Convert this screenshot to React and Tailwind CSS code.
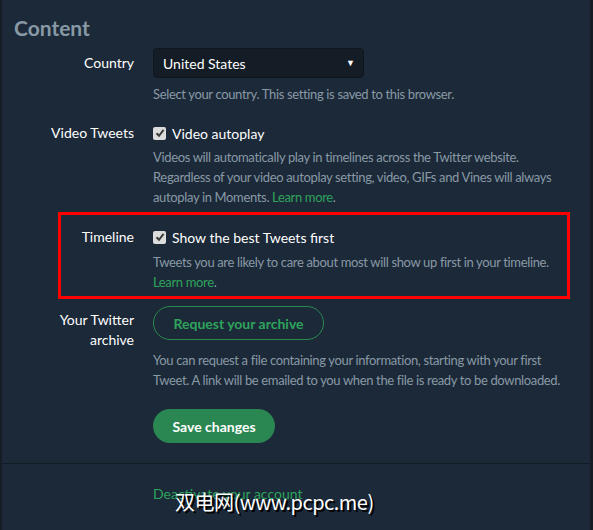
import React from 'react';

const font = { fontFamily: 'Lato, "Open Sans", sans-serif' };

// Native-looking checked checkbox
const CheckBox = () => (
  <span className="inline-flex h-[13px] w-[13px] shrink-0 items-center justify-center rounded-[2px] bg-[#dcdcdc]">
    <svg width="10" height="10" viewBox="0 0 10 10">
      <path d="M1.5 5.2 L4 7.8 L8.6 1.8" fill="none" stroke="#3b3b3b" strokeWidth="2" />
    </svg>
  </span>
);

const Help = ({ lines, link }) => (
  <div className="text-[13px] leading-[20px] tracking-[-0.35px] text-[#8899a6]">
    {lines.map((l, i) => (
      <div key={i} className="whitespace-nowrap">
        {l}
        {link && i === lines.length - 1 && (
          <>
            {l ? ' ' : ''}
            <span className="text-[#2ea35c]">Learn more</span>.
          </>
        )}
      </div>
    ))}
  </div>
);

const Row = ({ label, children, className = '' }) => (
  <div className={`grid grid-cols-[132px_1fr] gap-x-[19px] ${className}`}>
    <div className="text-right text-[14px] leading-[20px] text-white">{label}</div>
    <div>{children}</div>
  </div>
);

const App = () => {
  return (
    <div
      className="relative h-[530px] w-[593px] overflow-hidden border-l-2 border-r-[3px] border-[#141d26] bg-[#1c2938]"
      style={font}
    >
      <h2 className="pl-3 pt-4 text-[21px] font-bold leading-[24px] text-[#8899a6]">Content</h2>

      {/* Country */}
      <div className="mt-2 grid grid-cols-[132px_1fr] gap-x-[19px]">
        <div className="pt-[5px] text-right text-[14px] leading-[20px] text-white">Country</div>
        <div>
          <div className="flex h-[30px] w-[211px] items-center justify-between rounded-[4px] border border-[#0f161d] bg-[#141d26] pl-[9px] pr-[8px] text-[14px] text-white">
            <span>United States</span>
            <span className="text-[9px]">▼</span>
          </div>
          <div className="mt-[6px]">
            <Help lines={['Select your country. This setting is saved to this browser.']} />
          </div>
        </div>
      </div>

      {/* Video Tweets */}
      <Row label="Video Tweets" className="mt-[19px]">
        <div className="flex h-[20px] items-center gap-[6px] text-[14px] text-white">
          <CheckBox />
          <span>Video autoplay</span>
        </div>
        <div className="mt-1">
          <Help
            link
            lines={[
              'Videos will automatically play in timelines across the Twitter website.',
              'Regardless of your video autoplay setting, video, GIFs and Vines will always',
              'autoplay in Moments.',
            ]}
          />
        </div>
      </Row>

      {/* Timeline */}
      <div className="relative mt-5">
        <Row label="Timeline">
          <div className="flex h-[20px] items-center gap-[6px] text-[14px] text-white">
            <CheckBox />
            <span>Show the best Tweets first</span>
          </div>
          <div className="mt-[5px]">
            <Help link lines={['Tweets you are likely to care about most will show up first in your timeline.', '']} />
          </div>
        </Row>
        <div className="pointer-events-none absolute left-[56px] top-[-15px] h-[87px] w-[512px] border-[3px] border-[#ff0000]" />
      </div>

      {/* Archive */}
      <div className="mt-[14px] grid grid-cols-[132px_1fr] gap-x-[19px]">
        <div className="pt-1 text-right text-[14px] leading-[20px] text-white">
          Your Twitter
          <br />
          archive
        </div>
        <div>
          <div className="flex h-[34px] w-[171px] items-center justify-center rounded-full border border-[#2a8a50] text-[14px] font-bold text-[#2ea35c]">
            Request your archive
          </div>
          <div className="mt-[10px]">
            <Help
              lines={[
                'You can request a file containing your information, starting with your first',
                'Tweet. A link will be emailed to you when the file is ready to be downloaded.',
              ]}
            />
          </div>
          <div className="mt-[19px] flex h-[34px] w-[122px] items-center justify-center rounded-full bg-[#2b8752] text-[14px] font-bold text-white">
            Save changes
          </div>
        </div>
      </div>

      <div className="mt-5 h-px w-full bg-[#131c25]" />

      <div className="ml-[151px] mt-[20px] text-[14px] leading-[20px] text-[#2ea35c]">
        Deactivate your account
      </div>

      {/* watermark */}
      <div
        className="pointer-events-none absolute left-[173px] top-[489px] text-[20px] leading-[26px] tracking-[-0.5px] text-white"
        style={{ fontFamily: '"Noto Sans CJK SC", sans-serif', textShadow: '2px 2px 0 #000' }}
      >
        双电网(www.pcpc.me)
      </div>
    </div>
  );
};

export default App;
